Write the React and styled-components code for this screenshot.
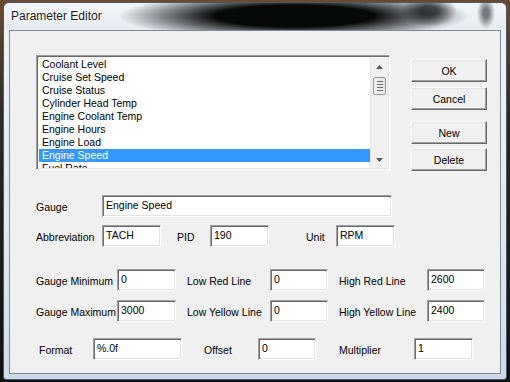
import React from 'react'
import styled, { createGlobalStyle } from 'styled-components'

const Global = createGlobalStyle`
html, body {
  margin: 0;
  padding: 0;
}
body {
  width: 510px;
  height: 382px;
  overflow: hidden;
  background: #1d1d1d;
  font-family: "Liberation Sans", Arial, sans-serif;
}
`

const Screen = styled.div`
width: 510px;
height: 382px;
box-sizing: border-box;
padding: 2px 3px 2px 3px;
display: flex;
background: linear-gradient(180deg, #6b4a2e 0%, #2a2a2a 30%, #111 100%);
`

const Window = styled.div`
flex: 1;
display: flex;
flex-direction: column;
box-sizing: border-box;
padding: 0 5px 5px 5px;
border: 1px solid #4c5866;
border-radius: 6px 6px 3px 3px;
background: linear-gradient(180deg, #eef3f8 0%, #e3eaf2 60%, #cddceb 100%);
`

const TitleBar = styled.div`
height: 27px;
box-sizing: border-box;
display: flex;
align-items: center;
margin: 0 -5px;
padding: 0 0 2px 7px;
background:
  radial-gradient(ellipse 175px 24px at 290px 13px, rgba(0,0,0,0.97) 45%, rgba(0,0,0,0) 100%),
  radial-gradient(ellipse 28px 16px at 425px 8px, rgba(20,20,20,0.7) 30%, rgba(0,0,0,0) 100%),
  radial-gradient(ellipse 9px 16px at 482px 10px, rgba(20,20,20,0.55) 30%, rgba(0,0,0,0) 100%),
  linear-gradient(180deg, #f2f5f8 0%, #e6ecf2 100%);
border-radius: 6px 6px 0 0;
`

const Title = styled.span`
font-family: "Liberation Sans", Arial, sans-serif;
font-size: 12px;
color: #1a1a1a;
text-shadow: 0 0 6px #fff, 0 0 3px #fff;
`

const Client = styled.div`
flex: 1;
display: flex;
flex-direction: column;
background: #f0f0f0;
border: 1px solid #7d8894;
font-size: 10.5px;
color: #000;
`

const Top = styled.div`
display: flex;
padding: 24px 0 0 26px;
`

const ListBox = styled.div`
width: 354px;
height: 115px;
box-sizing: border-box;
display: flex;
background: #fff;
border-top: 1px solid #a0a0a0;
border-left: 1px solid #a0a0a0;
border-right: 1px solid #fff;
border-bottom: 1px solid #fff;
box-shadow: inset 1px 1px 0 #696969, inset -1px -1px 0 #e3e3e3;
padding: 2px 1px 1px 2px;
overflow: hidden;
`

const Items = styled.div`
flex: 1;
overflow: hidden;
`

const Item = styled.div`
height: 13px;
line-height: 13px;
padding-left: 3px;
white-space: nowrap;
background: ${p => (p.$sel ? '#3399ff' : 'transparent')};
color: ${p => (p.$sel ? '#fff' : '#000')};
`

const ScrollBar = styled.div`
width: 17px;
display: flex;
flex-direction: column;
align-items: center;
background: #f0f0f0;
border-left: 1px solid #e6e6e6;
`

const Arrow = styled.div`
height: 17px;
width: 17px;
display: flex;
align-items: center;
justify-content: center;
`

const Thumb = styled.div`
width: 13px;
height: 18px;
box-sizing: border-box;
margin-top: 2px;
border: 1px solid #979797;
border-radius: 2px;
background: linear-gradient(90deg, #f2f2f2, #e4e4e4);
display: flex;
flex-direction: column;
align-items: center;
justify-content: center;
gap: 2px;
`

const Grip = styled.div`
width: 6px;
height: 1px;
background: #6c6c6c;
`

const Track = styled.div`
flex: 1;
`

const ButtonColumn = styled.div`
display: flex;
flex-direction: column;
margin-left: 21px;
padding-top: 4px;
`

const Button = styled.button`
width: 76px;
height: 23px;
margin-top: ${p => p.$mt || 0}px;
padding: 0;
box-sizing: border-box;
font-family: "Liberation Sans", Arial, sans-serif;
font-size: 10.5px;
color: #000;
background: #f0f0f0;
border-top: 1px solid #fff;
border-left: 1px solid #fff;
border-right: 1px solid #696969;
border-bottom: 1px solid #696969;
box-shadow: inset -1px -1px 0 #a0a0a0, inset 1px 1px 0 #e3e3e3;
`

const Form = styled.div`
display: flex;
flex-direction: column;
padding-left: 26px;
`

const Row = styled.div`
display: flex;
align-items: center;
height: 22px;
margin-top: ${p => p.$mt}px;
padding-left: ${p => p.$pl || 0}px;
`

const Label = styled.span`
width: ${p => p.$w}px;
margin-left: ${p => p.$ml || 0}px;
flex-shrink: 0;
white-space: nowrap;
padding-top: 2px;
`

const TextBox = styled.div`
width: ${p => p.$w}px;
height: 22px;
box-sizing: border-box;
flex-shrink: 0;
background: #fff;
border-top: 1px solid #a0a0a0;
border-left: 1px solid #a0a0a0;
border-right: 1px solid #fff;
border-bottom: 1px solid #fff;
box-shadow: inset 1px 1px 0 #696969, inset -1px -1px 0 #e3e3e3;
padding: 3px 0 0 3px;
line-height: 12px;
white-space: nowrap;
`

const items = [
  'Coolant Level',
  'Cruise Set Speed',
  'Cruise Status',
  'Cylinder Head Temp',
  'Engine Coolant Temp',
  'Engine Hours',
  'Engine Load',
  'Engine Speed',
  'Fuel Rate',
]

const ArrowIcon = ({ up }) => (
  <svg width="7" height="4" viewBox="0 0 7 4">
    <path d={up ? 'M0 4 L3.5 0 L7 4 Z' : 'M0 0 L3.5 4 L7 0 Z'} fill="#5a5a5a" />
  </svg>
)

export default function App() {
  return (
    <>
      <Global />
      <Screen>
        <Window>
          <TitleBar>
            <Title>Parameter Editor</Title>
          </TitleBar>
          <Client>
            <Top>
              <ListBox>
                <Items>
                  {items.map(it => (
                    <Item key={it} $sel={it === 'Engine Speed'}>{it}</Item>
                  ))}
                </Items>
                <ScrollBar>
                  <Arrow><ArrowIcon up /></Arrow>
                  <Thumb><Grip /><Grip /><Grip /><Grip /></Thumb>
                  <Track />
                  <Arrow><ArrowIcon /></Arrow>
                </ScrollBar>
              </ListBox>
              <ButtonColumn>
                <Button>OK</Button>
                <Button $mt={5}>Cancel</Button>
                <Button $mt={11}>New</Button>
                <Button $mt={4}>Delete</Button>
              </ButtonColumn>
            </Top>
            <Form>
              <Row $mt={24}>
                <Label $w={66}>Gauge</Label>
                <TextBox $w={290}>Engine Speed</TextBox>
              </Row>
              <Row $mt={8}>
                <Label $w={66}>Abbreviation</Label>
                <TextBox $w={59}>TACH</TextBox>
                <Label $w={33} $ml={16}>PID</Label>
                <TextBox $w={59}>190</TextBox>
                <Label $w={30} $ml={37}>Unit</Label>
                <TextBox $w={59}>RPM</TextBox>
              </Row>
              <Row $mt={22}>
                <Label $w={81}>Gauge Minimum</Label>
                <TextBox $w={59}>0</TextBox>
                <Label $w={83} $ml={11}>Low Red Line</Label>
                <TextBox $w={58}>0</TextBox>
                <Label $w={88} $ml={11}>High Red Line</Label>
                <TextBox $w={58}>2600</TextBox>
              </Row>
              <Row $mt={9}>
                <Label $w={81}>Gauge Maximum</Label>
                <TextBox $w={59}>3000</TextBox>
                <Label $w={83} $ml={11}>Low Yellow Line</Label>
                <TextBox $w={58}>0</TextBox>
                <Label $w={88} $ml={11}>High Yellow Line</Label>
                <TextBox $w={58}>2400</TextBox>
              </Row>
              <Row $mt={16} $pl={3}>
                <Label $w={54}>Format</Label>
                <TextBox $w={89}>%.0f</TextBox>
                <Label $w={54} $ml={22}>Offset</Label>
                <TextBox $w={58}>0</TextBox>
                <Label $w={75} $ml={23}>Multiplier</Label>
                <TextBox $w={59}>1</TextBox>
              </Row>
            </Form>
          </Client>
        </Window>
      </Screen>
    </>
  )
}
